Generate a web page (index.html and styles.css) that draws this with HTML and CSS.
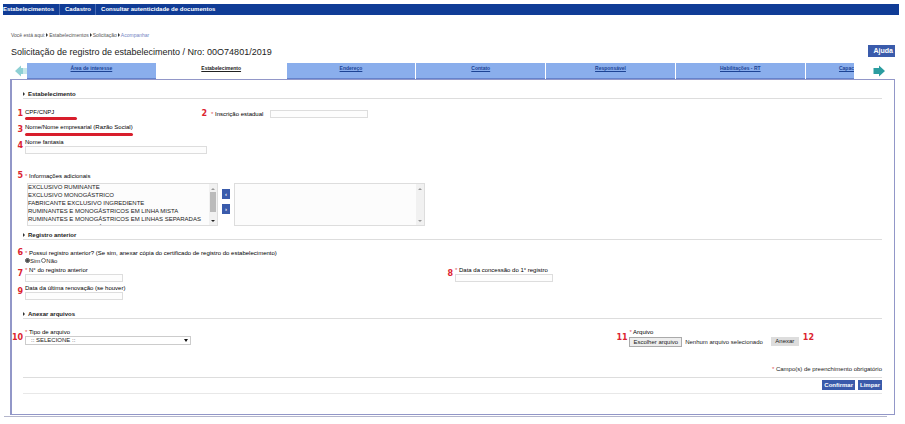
FILE: index.html
```html
<!DOCTYPE html>
<html lang="pt-BR">

<head>
    <meta charset="UTF-8">
    <meta name="viewport" content="width=device-width, initial-scale=1.0">
    <title>Solicitação de registro de estabelecimento</title>
    <link rel="stylesheet" href="styles.css">
</head>

<body>

    <nav class="menu">
        <a href="#">Estabelecimentos</a>
        <a href="#">Cadastro</a>
        <a href="#">Consultar autenticidade de documentos</a>
    </nav>

    <main class="page">
        <div class="breadcrumb">
            Você está aqui: <i></i> <span>Estabelecimentos</span> <i></i> <span>Solicitação</span> <i></i> <a href="#">Acompanhar</a>
        </div>

        <header class="title-bar">
            <h1>Solicitação de registro de estabelecimento / Nro: 00O74801/2019</h1>
            <button type="button" class="btn help">Ajuda</button>
        </header>

        <div class="tabs">
            <button type="button" class="arrow" aria-label="Anterior">
                <svg class="prev" viewBox="0 0 12 12"><path d="M0 6 L6 0.5 V3 H8 V9 H6 V11.5 Z M8.5 3 H9.5 V9 H8.5 Z M10.5 3 H11.5 V9 H10.5 Z" /></svg>
            </button>
            <div class="tab-list">
                <a class="tab" href="#">Área de interesse</a>
                <a class="tab active" href="#">Estabelecimento</a>
                <a class="tab" href="#">Endereço</a>
                <a class="tab" href="#">Contato</a>
                <a class="tab" href="#">Responsável</a>
                <a class="tab" href="#">Habilitações - RT</a>
                <a class="tab last" href="#">Capac</a>
            </div>
            <button type="button" class="arrow next-arrow" aria-label="Próximo">
                <svg class="next" viewBox="0 0 12 12"><path d="M12 6 L6 0.5 V3 H0.5 V9 H6 V11.5 Z" /></svg>
            </button>
        </div>

        <form class="panel">
            <h2>Estabelecimento</h2>
            <div class="row first">
                <b class="num">1</b>
                <div class="field half">
                    <span class="label">CPF/CNPJ</span>
                    <div class="mark short"></div>
                </div>
                <b class="num">2</b>
                <div class="inline-field">
                    <label for="inscricao"><em>*</em> Inscrição estadual</label>
                    <input type="text" id="inscricao" class="text">
                </div>
            </div>
            <div class="row name">
                <b class="num">3</b>
                <div class="field">
                    <span class="label">Nome/Nome empresarial (Razão Social)</span>
                    <div class="mark"></div>
                </div>
            </div>
            <div class="row">
                <b class="num">4</b>
                <div class="field">
                    <label for="fantasia">Nome fantasia</label>
                    <input type="text" id="fantasia" class="text wide">
                </div>
            </div>
            <div class="row info">
                <b class="num top">5</b>
                <div class="field">
                    <label for="info"><em>*</em> Informações adicionais</label>
                    <div class="picker">
                        <div class="list">
                            <select id="info" multiple>
                                <option>EXCLUSIVO RUMINANTE</option>
                                <option>EXCLUSIVO MONOGÁSTRICO</option>
                                <option>FABRICANTE EXCLUSIVO INGREDIENTE</option>
                                <option>RUMINANTES E MONOGÁSTRICOS EM LINHA MISTA</option>
                                <option>RUMINANTES E MONOGÁSTRICOS EM LINHAS SEPARADAS</option>
                                <option>RUMINANTES E MONOGÁSTRICOS EM PLANTAS SEPARADAS</option>
                            </select>
                            <div class="bar"><i class="up"></i><i class="thumb"></i><i class="down dark"></i></div>
                        </div>
                        <div class="moves">
                            <button type="button" class="btn">‹</button>
                            <button type="button" class="btn">›</button>
                        </div>
                        <div class="list">
                            <select aria-label="Selecionados" multiple></select>
                            <div class="bar"><i class="up"></i><i class="down"></i></div>
                        </div>
                    </div>
                </div>
            </div>

            <h2>Registro anterior</h2>
            <div class="row first">
                <b class="num top">6</b>
                <div class="field">
                    <span class="label"><em>*</em> Possui registro anterior? (Se sim, anexar cópia do certificado de registro do estabelecimento)</span>
                    <div class="radios">
                        <input type="radio" name="anterior" id="sim" checked><label for="sim">Sim</label>
                        <input type="radio" name="anterior" id="nao"><label for="nao">Não</label>
                    </div>
                </div>
            </div>
            <div class="row">
                <b class="num">7</b>
                <div class="field main">
                    <label for="numero"><em>*</em> N° do registro anterior</label>
                    <input type="text" id="numero" class="text">
                </div>
                <b class="num">8</b>
                <div class="field">
                    <label for="concessao"><em>*</em> Data da concessão do 1° registro</label>
                    <input type="text" id="concessao" class="text">
                </div>
            </div>
            <div class="row">
                <b class="num">9</b>
                <div class="field">
                    <label for="renovacao">Data da última renovação (se houver)</label>
                    <input type="text" id="renovacao" class="text">
                </div>
            </div>

            <h2>Anexar arquivos</h2>
            <div class="row first">
                <b class="num">10</b>
                <div class="field file-type">
                    <label for="tipo"><em>*</em> Tipo de arquivo</label>
                    <div class="combo">
                        <select id="tipo">
                            <option>:: SELECIONE ::</option>
                        </select>
                    </div>
                </div>
                <b class="num">11</b>
                <div class="field">
                    <label for="arquivo"><em>*</em> Arquivo</label>
                    <div class="file">
                        <input type="file" id="arquivo">
                        <label for="arquivo" class="choose">Escolher arquivo</label>
                        <span>Nenhum arquivo selecionado</span>
                        <button type="button" class="attach">Anexar</button>
                    </div>
                </div>
                <b class="num">12</b>
            </div>

            <p class="note"><em>*</em> Campo(s) de preenchimento obrigatório</p>
            <div class="actions">
                <button type="submit" class="btn">Confirmar</button>
                <button type="reset" class="btn">Limpar</button>
            </div>
        </form>
        <div class="bottom-line"></div>
    </main>

</body>

</html>
```
FILE: styles.css
```css
* {
    margin: 0;
    padding: 0;
    box-sizing: border-box;
}

body {
    font-family: "Liberation Sans", Arial, sans-serif;
    font-size: 6px;
    line-height: 8px;
    color: #222;
    background: #fff;
    padding: 4px 6px 0 3px;
}

button,
input,
select {
    font: inherit;
    color: inherit;
}

em {
    color: #e0525a;
    font-style: normal;
}

/* Top menu */
.menu {
    display: flex;
    background: #103c96;
    height: 11px;
    line-height: 11px;
}

.menu a {
    color: #fff;
    font-weight: bold;
    text-decoration: none;
    padding: 0 5px 0 0;
}

.menu a + a {
    border-left: 1px solid #4a6cb4;
    padding: 0 4px 0 5px;
}

.page {
    padding: 16px 4px 0 7px;
}

.breadcrumb {
    display: flex;
    align-items: center;
    gap: 1px;
    font-size: 5px;
    color: #555;
    padding-left: 1px;
}

.breadcrumb i {
    border: 2px solid transparent;
    border-left-color: #333;
    border-right: 0;
}

.breadcrumb a {
    color: #7385c4;
    text-decoration: none;
}

.title-bar {
    display: flex;
    justify-content: space-between;
    align-items: center;
    margin-top: 6px;
    height: 12px;
}

h1 {
    font-size: 9px;
    font-weight: normal;
    padding: 2px 0 0 1px;
}

.btn {
    background: #3a5bab;
    border: 0;
    color: #fff;
    font-weight: bold;
}

.help {
    width: 27px;
    height: 12px;
    font-size: 7px;
    text-align: right;
    padding-right: 2px;
}

/* Tabs */
.tabs {
    display: flex;
    margin-top: 6px;
    height: 16px;
}

.arrow {
    width: 17px;
    background: none;
    border: 0;
    text-align: right;
}

.arrow svg {
    display: block;
    width: 12px;
    height: 12px;
    margin: 0 0 0 5px;
}

.next-arrow {
    width: 41px;
}

.next-arrow svg {
    margin-left: 19px;
}

.prev {
    fill: #8ed0d4;
}

.next {
    fill: #2b9da0;
}

.tab-list {
    display: flex;
    flex: 1;
    gap: 1px;
    overflow: hidden;
}

.tab {
    flex: 8;
    background: #8aaeec;
    border-bottom: 1px solid #6583cc;
    color: #1c4394;
    font-size: 5px;
    font-weight: bold;
    text-align: center;
    padding-top: 1px;
}

.tab.active {
    background: #fff;
    border-color: #fff;
    color: #222;
}

.tab.last {
    flex: 3;
    text-align: right;
}

/* Form */
.panel {
    border: 1px solid #9297c8;
    border-left-width: 2px;
    padding: 0 12px 20px 11px;
}

h2 {
    display: flex;
    align-items: center;
    font-size: 6px;
    border-bottom: 1px solid #ddd;
    margin-top: 10px;
}

h2::before {
    content: "";
    border: 2px solid transparent;
    border-left-color: #333;
    border-right: 0;
    margin-right: 3px;
}

.row {
    display: flex;
    margin: 2px 0 0 -11px;
}

.row.first {
    margin-top: 9px;
}

.num {
    flex: none;
    width: 11px;
    margin-right: 2px;
    align-self: center;
    font-family: "DejaVu Sans", sans-serif;
    font-size: 8px;
    color: #dc2430;
    text-align: right;
}

.num.top {
    align-self: flex-start;
}

.label,
.field > label,
.inline-field label {
    display: block;
    color: #000;
    white-space: nowrap;
}

.half {
    width: 171px;
}

.inline-field {
    display: flex;
    align-items: center;
    gap: 7px;
    margin-left: 2px;
}

.text {
    display: block;
    width: 98px;
    height: 8px;
    background: #fdfdfd;
    border: 1px solid #ddd;
}

.text.wide {
    width: 182px;
}

/* Hand-drawn red underline */
.mark {
    width: 108px;
    height: 3px;
    margin-top: 2px;
    border-radius: 2px;
    background: #d81e2c;
}

.mark.short {
    width: 52px;
    margin-top: 1px;
}

.row.name {
    margin-top: 3px;
}

.row.info {
    margin-top: 18px;
}

.picker {
    display: flex;
    margin: 3px 0 0 2px;
}

.list {
    display: flex;
    width: 191px;
    height: 43px;
    border: 1px solid #ddd;
    background: #fcfcfc;
}

.list select {
    flex: 1;
    min-width: 0;
    border: 0;
    background: none;
    overflow: hidden;
    outline: 0;
}

.list option {
    min-height: 0;
    height: 8px;
    padding: 0;
    line-height: 8px;
}

.bar {
    display: flex;
    flex-direction: column;
    align-items: center;
    width: 8px;
    padding: 4px 1px 3px;
    background: #f1f1f1;
}

.up {
    border: 2px solid transparent;
    border-top: 0;
    border-bottom-color: #999;
}

.thumb {
    align-self: stretch;
    height: 20px;
    margin-top: 2px;
    background: #bbb;
}

.down {
    border: 2px solid transparent;
    border-bottom: 0;
    border-top-color: #999;
    margin-top: auto;
}

.down.dark {
    border-top-color: #222;
}

.moves {
    display: flex;
    flex-direction: column;
    gap: 5px;
    padding: 6px 4px 0;
}

.moves .btn {
    width: 8px;
    height: 10px;
    line-height: 8px;
}

.info + h2 {
    margin-top: 5px;
}

.radios {
    display: flex;
    align-items: center;
    height: 7px;
}

.radios input {
    width: 5px;
    height: 5px;
    accent-color: #444;
}

.radios label {
    margin-right: 1px;
}

.main {
    flex: 0 1 417px;
}

.file-type {
    flex: 1;
}

.combo {
    position: relative;
    width: 166px;
}

.combo::after {
    content: "";
    position: absolute;
    right: 3px;
    top: 3px;
    border: 2px solid transparent;
    border-top: 3px solid #111;
    border-bottom: 0;
}

.combo select {
    appearance: none;
    display: block;
    width: 100%;
    height: 9px;
    line-height: 7px;
    padding-left: 5px;
    border: 1px solid #ccc;
    background: #fff;
}

.file {
    display: flex;
    align-items: center;
    height: 11px;
}

.file input {
    position: absolute;
    width: 1px;
    height: 1px;
    opacity: 0;
}

.choose {
    border: 1px solid #aaa;
    background: #eee;
    padding: 0 3px;
}

.file span {
    margin: 0 8px 0 3px;
}

.attach {
    width: 28px;
    height: 9px;
    line-height: 9px;
    background: #ddd;
    border: 0;
}

.file-type ~ .num:last-child {
    width: auto;
    margin: 0 68px 0 4px;
}

.note {
    text-align: right;
    margin-top: 18px;
}

.actions {
    display: flex;
    justify-content: flex-end;
    gap: 3px;
    margin-top: 4px;
    padding: 2px 0 3px;
    border-top: 1px solid #ddd;
    border-bottom: 1px solid #e8e8e8;
}

.actions .btn {
    height: 10px;
    padding: 0 2px;
}

.bottom-line {
    margin: 1px 8px 0 -6px;
    height: 1px;
    background: #b4b6cc;
}
```
